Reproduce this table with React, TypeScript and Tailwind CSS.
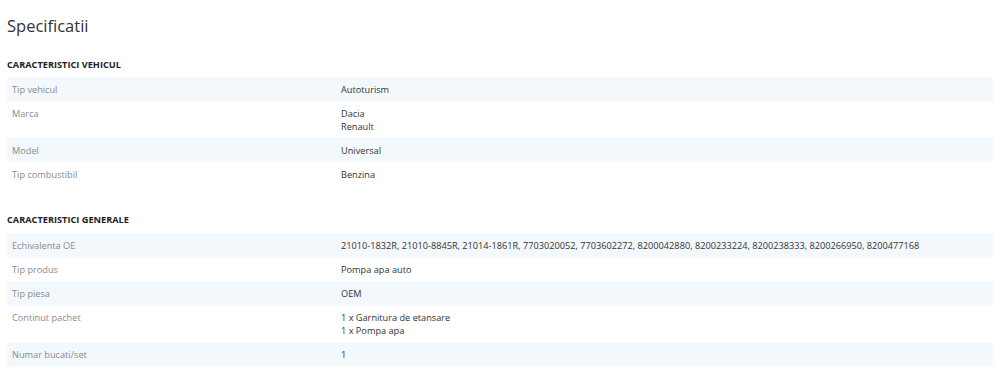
import React from 'react';

type Row = { label: string; value: string[] };

const vehicul: Row[] = [
  { label: 'Tip vehicul', value: ['Autoturism'] },
  { label: 'Marca', value: ['Dacia', 'Renault'] },
  { label: 'Model', value: ['Universal'] },
  { label: 'Tip combustibil', value: ['Benzina'] },
];

const generale: Row[] = [
  {
    label: 'Echivalenta OE',
    value: [
      '21010-1832R, 21010-8845R, 21014-1861R, 7703020052, 7703602272, 8200042880, 8200233224, 8200238333, 8200266950, 8200477168',
    ],
  },
  { label: 'Tip produs', value: ['Pompa apa auto'] },
  { label: 'Tip piesa', value: ['OEM'] },
  { label: 'Continut pachet', value: ['1 x Garnitura de etansare', '1 x Pompa apa'] },
  { label: 'Numar bucati/set', value: ['1'] },
];

function SpecTable({ rows }: { rows: Row[] }) {
  return (
    <div className="flex flex-col">
      {rows.map((row, idx) => (
        <div
          key={row.label}
          className={`grid grid-cols-[334px_1fr] py-[5.5px] leading-[13px] ${idx % 2 === 0 ? 'bg-[#f3f8fd]' : 'bg-white'}`}
        >
          <div className="pl-[5px] text-[#8a8a8a]">{row.label}</div>
          <div className="text-[#333333]">
            {row.value.map((v) => (
              <div key={v}>{v}</div>
            ))}
          </div>
        </div>
      ))}
    </div>
  );
}

export default function App() {
  return (
    <div className="min-h-screen bg-white font-['Open_Sans',sans-serif] text-[9.2px] antialiased">
      <div className="pl-[7px] pr-[7px] pt-[13.5px]">
        {/* --- TITLE --- */}
        <h1 className="text-[16.5px] leading-[24px] font-normal text-[#333333]">Specificatii</h1>

        {/* --- CARACTERISTICI VEHICUL --- */}
        <section className="mt-[20px]">
          <h2 className="font-bold text-[#222222] leading-[13px] mb-[6.5px]">CARACTERISTICI VEHICUL</h2>
          <SpecTable rows={vehicul} />
        </section>

        {/* --- CARACTERISTICI GENERALE --- */}
        <section className="mt-[26.5px]">
          <h2 className="font-bold text-[#222222] leading-[13px] mb-[8px]">CARACTERISTICI GENERALE</h2>
          <SpecTable rows={generale} />
        </section>
      </div>
    </div>
  );
}
